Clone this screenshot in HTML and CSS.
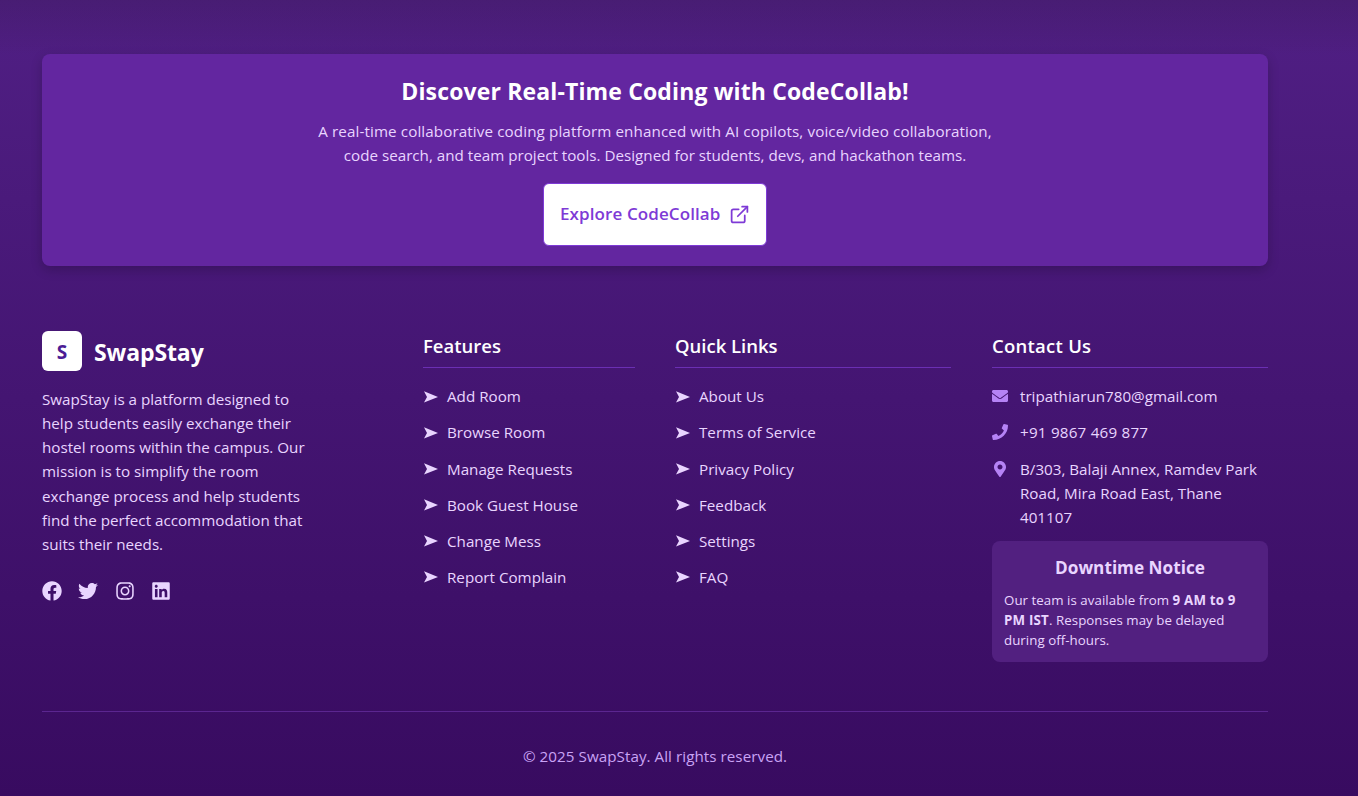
FILE: index.html
```html
<!DOCTYPE html>
<html lang="en">
<head>
<meta charset="utf-8">
<title>SwapStay</title>
<link rel="stylesheet" href="styles.css">
</head>
<body>
<svg class="defs" aria-hidden="true">
  <symbol id="arrow" viewBox="0 0 14 12"><path d="M0 0.2 14 6 0 11.6 3 6z"/></symbol>
</svg>
<footer class="footer">
  <section class="promo">
    <h2 class="promo-title">Discover Real-Time Coding with CodeCollab!</h2>
    <p class="promo-text"><span class="promo-l1">A real-time collaborative coding platform enhanced with AI copilots, voice/video collaboration,</span><br><span class="promo-l2">code search, and team project tools. Designed for students, devs, and hackathon teams.</span></p>
    <a class="promo-btn"><span>Explore CodeCollab</span>
      <svg viewBox="0 0 24 24" fill="none" stroke="currentColor" stroke-width="2" stroke-linecap="round" stroke-linejoin="round"><path d="M18 13v6a2 2 0 0 1-2 2H5a2 2 0 0 1-2-2V8a2 2 0 0 1 2-2h6"/><path d="M15 3h6v6"/><path d="M10 14 21 3"/></svg>
    </a>
  </section>
  <div class="columns">
    <div class="brand">
      <div class="brand-head"><span class="logo">S</span><span class="brand-name">SwapStay</span></div>
      <p class="about">SwapStay is a platform designed to<br>help students easily exchange their<br>hostel rooms within the campus. Our<br>mission is to simplify the room<br>exchange process and help students<br>find the perfect accommodation that<br>suits their needs.</p>
      <div class="social">
        <svg viewBox="0 0 512 512"><path d="M504 256C504 119 393 8 256 8S8 119 8 256c0 123.78 90.69 226.38 209.25 245V327.69h-63V256h63v-54.64c0-62.15 37-96.48 93.67-96.48 27.14 0 55.52 4.84 55.52 4.84v61h-31.28c-30.8 0-40.41 19.12-40.41 38.73V256h68.78l-11 71.69h-57.78V501C413.31 482.38 504 379.78 504 256z"/></svg>
        <svg viewBox="0 0 512 512"><path d="M459.37 151.716c.325 4.548.325 9.097.325 13.645 0 138.72-105.583 298.558-298.558 298.558-59.452 0-114.68-17.219-161.137-47.106 8.447.974 16.568 1.299 25.34 1.299 49.055 0 94.213-16.568 130.274-44.832-46.132-.975-84.792-31.188-98.112-72.772 6.498.974 12.995 1.624 19.818 1.624 9.421 0 18.843-1.3 27.614-3.573-48.081-9.747-84.143-51.98-84.143-102.985v-1.299c13.969 7.797 30.214 12.67 47.431 13.319-28.264-18.843-46.781-51.005-46.781-87.391 0-19.492 5.197-37.36 14.294-52.954 51.655 63.675 129.3 105.258 216.365 109.807-1.624-7.797-2.599-15.918-2.599-24.04 0-57.828 46.782-104.934 104.934-104.934 30.213 0 57.502 12.67 76.67 33.137 23.715-4.548 46.456-13.32 66.599-25.34-7.798 24.366-24.366 44.833-46.132 57.827 21.117-2.273 41.584-8.122 60.426-16.243-14.292 20.791-32.161 39.308-52.628 54.253z"/></svg>
        <svg viewBox="-32 0 512 512"><path d="M224.1 141c-63.6 0-114.9 51.3-114.9 114.9s51.3 114.9 114.9 114.9S339 319.5 339 255.9 287.7 141 224.1 141zm0 189.6c-41.1 0-74.7-33.5-74.7-74.7s33.5-74.7 74.7-74.7 74.7 33.5 74.7 74.7-33.6 74.7-74.7 74.7zm146.4-194.3c0 14.9-12 26.8-26.8 26.8-14.9 0-26.8-12-26.8-26.8s12-26.8 26.8-26.8 26.8 12 26.8 26.8zm76.1 27.2c-1.7-35.9-9.9-67.7-36.2-93.9-26.2-26.2-58-34.4-93.9-36.2-37-2.1-147.9-2.1-184.9 0-35.8 1.7-67.6 9.9-93.9 36.1s-34.4 58-36.2 93.9c-2.1 37-2.1 147.9 0 184.9 1.7 35.9 9.9 67.7 36.2 93.9s58 34.4 93.9 36.2c37 2.1 147.9 2.1 184.9 0 35.9-1.7 67.7-9.9 93.9-36.2 26.2-26.2 34.4-58 36.2-93.9 2.1-37 2.1-147.8 0-184.8zM398.8 388c-7.8 19.6-22.9 34.7-42.6 42.6-29.5 11.7-99.5 9-132.1 9s-102.7 2.6-132.1-9c-19.6-7.8-34.7-22.9-42.6-42.6-11.7-29.5-9-99.5-9-132.1s-2.6-102.7 9-132.1c7.8-19.6 22.9-34.7 42.6-42.6 29.5-11.7 99.5-9 132.1-9s102.7-2.6 132.1 9c19.6 7.8 34.7 22.9 42.6 42.6 11.7 29.5 9 99.5 9 132.1s2.7 102.7-9 132.1z"/></svg>
        <svg viewBox="-32 0 512 512"><path d="M416 32H31.9C14.3 32 0 46.5 0 64.3v383.4C0 465.5 14.3 480 31.9 480H416c17.6 0 32-14.5 32-32.3V64.3c0-17.8-14.4-32.3-32-32.3zM135.4 416H69V202.2h66.5V416zm-33.2-243c-21.3 0-38.5-17.3-38.5-38.5S80.9 96 102.2 96c21.2 0 38.5 17.3 38.5 38.5 0 21.3-17.2 38.5-38.5 38.5zm282.1 243h-66.4V312c0-24.8-.5-56.7-34.5-56.7-34.6 0-39.9 27-39.9 54.9V416h-66.4V202.2h63.7v29.2h.9c8.9-16.8 30.6-34.5 62.9-34.5 67.2 0 79.7 44.3 79.7 101.9V416z"/></svg>
      </div>
    </div>
    <nav class="col">
      <h3 class="col-title">Features</h3>
      <ul class="list">
        <li><svg class="arrow"><use href="#arrow"/></svg>Add Room</li>
        <li><svg class="arrow"><use href="#arrow"/></svg>Browse Room</li>
        <li><svg class="arrow"><use href="#arrow"/></svg>Manage Requests</li>
        <li><svg class="arrow"><use href="#arrow"/></svg>Book Guest House</li>
        <li><svg class="arrow"><use href="#arrow"/></svg>Change Mess</li>
        <li><svg class="arrow"><use href="#arrow"/></svg>Report Complain</li>
      </ul>
    </nav>
    <nav class="col">
      <h3 class="col-title">Quick Links</h3>
      <ul class="list">
        <li><svg class="arrow"><use href="#arrow"/></svg>About Us</li>
        <li><svg class="arrow"><use href="#arrow"/></svg>Terms of Service</li>
        <li><svg class="arrow"><use href="#arrow"/></svg>Privacy Policy</li>
        <li><svg class="arrow"><use href="#arrow"/></svg>Feedback</li>
        <li><svg class="arrow"><use href="#arrow"/></svg>Settings</li>
        <li><svg class="arrow"><use href="#arrow"/></svg>FAQ</li>
      </ul>
    </nav>
    <div class="col">
      <h3 class="col-title wide">Contact Us</h3>
      <ul class="list contact">
        <li><svg viewBox="0 0 512 512"><path d="M502.3 190.8c3.9-3.1 9.7-.2 9.7 4.7V400c0 26.5-21.5 48-48 48H48c-26.5 0-48-21.5-48-48V195.6c0-5 5.7-7.8 9.7-4.7 22.4 17.4 52.1 39.5 154.1 113.6 21.1 15.4 56.7 47.8 92.2 47.6 35.7.3 72-32.8 92.3-47.6 102-74.1 131.6-96.3 154-113.7zM256 320c23.2.4 56.6-29.2 73.4-41.4 132.7-96.3 142.8-104.7 173.4-128.7 5.8-4.5 9.2-11.5 9.2-18.9v-19c0-26.5-21.5-48-48-48H48c-26.5 0-48 21.5-48 48v19c0 7.4 3.4 14.3 9.2 18.9 30.6 23.9 40.7 32.4 173.4 128.7 16.8 12.2 50.2 41.8 73.4 41.4z"/></svg><span>tripathiarun780@gmail.com</span></li>
        <li><svg viewBox="0 0 512 512"><path d="M493.4 24.6l-104-24c-11.3-2.6-22.9 3.3-27.5 13.9l-48 112c-4.2 9.8-1.4 21.3 6.9 28l60.6 49.6c-36 76.7-98.9 140.5-177.2 177.2l-49.6-60.6c-6.8-8.3-18.2-11.1-28-6.9l-112 48C3.9 366.5-2 378.1.6 389.4l24 104C27.1 504.2 36.7 512 48 512c256.1 0 464-207.5 464-464 0-11.2-7.7-20.9-18.6-23.4z"/></svg><span class="phone">+91 9867 469 877</span></li>
        <li><svg viewBox="-64 0 512 512"><path d="M172.268 501.67C26.97 291.031 0 269.413 0 192 0 85.961 85.961 0 192 0s192 85.961 192 192c0 77.413-26.97 99.031-172.268 309.67-9.535 13.774-29.93 13.773-39.464 0zM192 272c44.183 0 80-35.817 80-80s-35.817-80-80-80-80 35.817-80 80 35.817 80 80 80z"/></svg><span>B/303, Balaji Annex, Ramdev Park<br>Road, Mira Road East, Thane<br>401107</span></li>
      </ul>
      <div class="notice">
        <h4 class="notice-title">Downtime Notice</h4>
        <p class="notice-text">Our team is available from <strong>9 AM to 9</strong><br><strong>PM IST</strong>. Responses may be delayed<br>during off-hours.</p>
      </div>
    </div>
  </div>
  <div class="bottom">© 2025 SwapStay. All rights reserved.</div>
</footer>
</body>
</html>
```
FILE: styles.css
```css
* { box-sizing: border-box; margin: 0; padding: 0; }
body {
  font-family: "Open Sans", "Noto Sans", sans-serif;
  font-size: 15.2px;
  line-height: 24.16px;
  color: #e9d5ff;
  white-space: nowrap;
  overflow: hidden;
}
.defs { display: none; }
.footer {
  height: 796px;
  padding: 54px 90px 0 42px;
  background:
    linear-gradient(rgba(40, 20, 50, .2), rgba(40, 20, 50, 0) 55px),
    linear-gradient(#501f84, #380b60);
}
.promo {
  display: flex;
  flex-direction: column;
  align-items: center;
  height: 212px;
  padding-top: 19px;
  border-radius: 8px;
  background: #6326a0;
  box-shadow: 0 4px 12px rgba(0, 0, 0, .2);
  text-align: center;
}
.promo-title { color: #fff; font-size: 23px; line-height: 36px; font-weight: 700; letter-spacing: .14px; margin-bottom: 10px; }
.promo-text { margin-bottom: 16px; line-height: 24px; }
.promo-l1 { letter-spacing: .11px; }
.promo-btn {
  display: flex;
  align-items: center;
  gap: 8px;
  width: 224px;
  height: 63px;
  padding: 0 16px;
  border: 1px solid #7e3ad6;
  border-radius: 6px;
  background: #fff;
  color: #7e3ad6;
  font-size: 17px;
  font-weight: 600;
  letter-spacing: .1px;
}
.promo-btn svg { width: 21px; height: 21px; flex: none; }
.columns {
  display: grid;
  grid-template-columns: 341px 212px 276px 276px;
  column-gap: 40px;
  margin-top: 65px;
  height: 331px;
}
.columns > :last-child { margin-left: 1px; margin-right: -1px; }
.brand-head { display: flex; align-items: center; gap: 12px; height: 40px; margin-bottom: 16px; }
.logo {
  width: 40px;
  height: 40px;
  border-radius: 6px;
  background: #fff;
  color: #4c1d95;
  font-size: 19px;
  font-weight: 700;
  line-height: 42px;
  text-align: center;
}
.brand-name { color: #fff; font-size: 23px; font-weight: 700; line-height: 43px; padding-top: 3px; letter-spacing: -.1px; }
.social { display: flex; gap: 16.4px; margin-top: 25px; }
.social svg { width: 20px; height: 20px; fill: currentColor; }
.col-title {
  height: 37px;
  border-bottom: 1px solid #6b2fb3;
  color: #fff;
  font-size: 18.5px;
  font-weight: 600;
  line-height: 29px;
}
.col-title.wide { letter-spacing: .25px; }
.list { list-style: none; margin-top: 16.25px; display: flex; flex-direction: column; gap: 12px; }
.list li { display: flex; }
.arrow { width: 14px; height: 12px; margin: 6.25px 9px 0 1px; fill: currentColor; flex: none; }
.contact svg { width: 16px; height: 16px; margin: 4px 12px 0 0; fill: #b583f5; flex: none; }
.phone { letter-spacing: .22px; }
.notice { height: 121px; margin-top: 12.25px; padding: 12px; border-radius: 8px; background: #522080; }
.notice-title { font-size: 17.2px; line-height: 29px; font-weight: 700; text-align: center; margin-bottom: 8px; }
.notice-text { font-size: 13.3px; line-height: 20px; letter-spacing: .04px; }
.notice-text strong { letter-spacing: .2px; }
.bottom { margin-top: 49px; padding-top: 32px; border-top: 1px solid #5b2690; text-align: center; color: #c9a3f5; letter-spacing: .05px; }
```
